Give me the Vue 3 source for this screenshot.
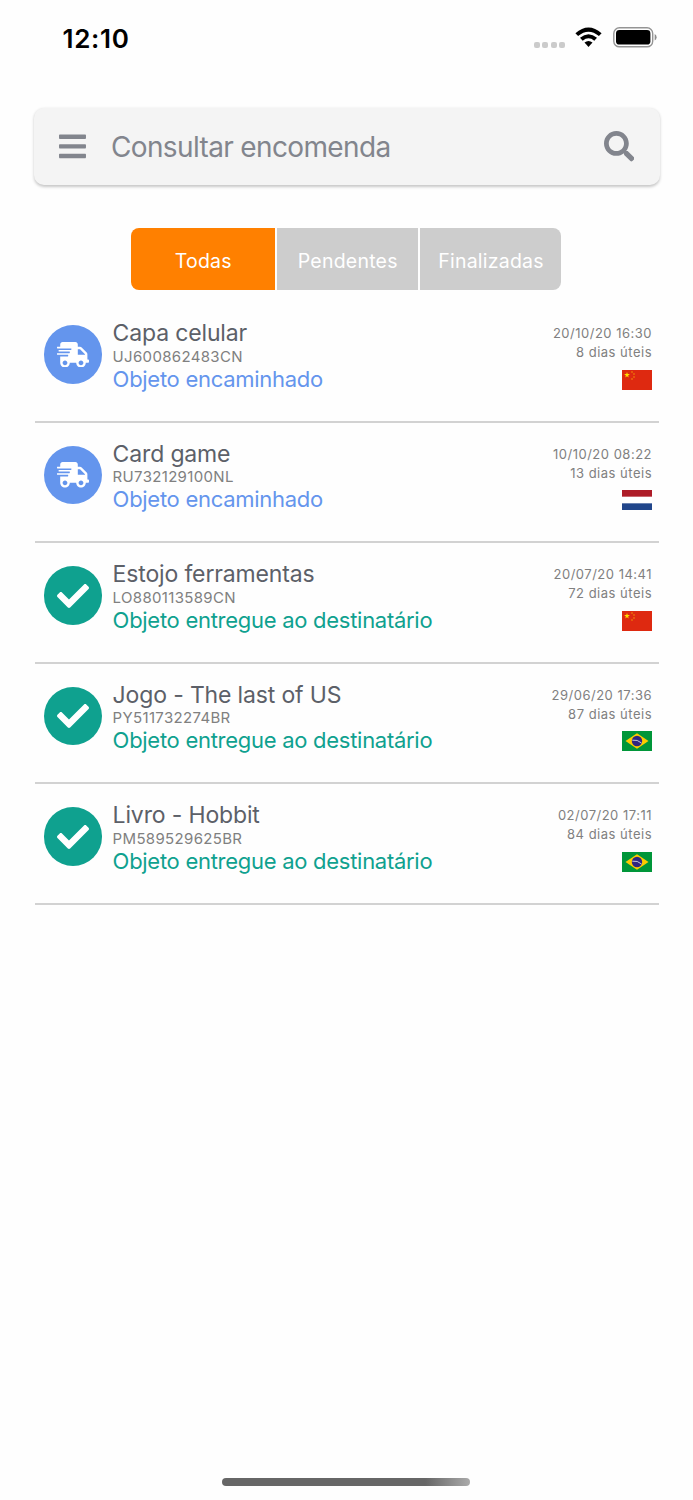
<script setup>
import { ref } from 'vue'

const tabs = ['Todas', 'Pendentes', 'Finalizadas']
const active = ref(0)

const parcels = [
  { name: 'Capa celular', code: 'UJ600862483CN', status: 'Objeto encaminhado', done: false, date: '20/10/20 16:30', days: '8 dias úteis', flag: 'cn' },
  { name: 'Card game', code: 'RU732129100NL', status: 'Objeto encaminhado', done: false, date: '10/10/20 08:22', days: '13 dias úteis', flag: 'nl' },
  { name: 'Estojo ferramentas', code: 'LO880113589CN', status: 'Objeto entregue ao destinatário', done: true, date: '20/07/20 14:41', days: '72 dias úteis', flag: 'cn' },
  { name: 'Jogo - The last of US', code: 'PY511732274BR', status: 'Objeto entregue ao destinatário', done: true, date: '29/06/20 17:36', days: '87 dias úteis', flag: 'br' },
  { name: 'Livro - Hobbit', code: 'PM589529625BR', status: 'Objeto entregue ao destinatário', done: true, date: '02/07/20 17:11', days: '84 dias úteis', flag: 'br' },
]
</script>

<template>
  <main class="screen">
    <header class="status-bar">
      <span class="clock">12:10</span>
      <div class="indicators">
        <span class="dots"><i></i><i></i><i></i><i></i></span>
        <svg class="wifi" viewBox="0 0 27 20" width="27" height="20">
          <path d="M0.4 6.2Q13.5 -5.4 26.6 6.2L23.9 9.1Q13.5 0.2 3.1 9.1Z" />
          <path d="M5 10.8Q13.5 3.5 22 10.8L19.3 13.7Q13.5 8.8 7.7 13.7Z" />
          <path d="M9.5 15.6Q13.5 12.3 17.5 15.6L13.5 20Z" />
        </svg>
        <svg class="battery" viewBox="0 0 44 21" width="44" height="21">
          <rect x="0.8" y="0.8" width="38.9" height="19" rx="5.6" fill="none" stroke="#949494" stroke-width="1.4" />
          <rect x="3" y="3" width="34.4" height="14.6" rx="3.4" />
          <path d="M41.7 7Q43.6 8 43.6 10.3Q43.6 12.6 41.7 13.6Z" fill="#8d8d8d" />
        </svg>
      </div>
    </header>

    <div class="search">
      <svg class="bars" viewBox="0 0 448 512" width="27" height="30.8">
        <path d="M16 132h416c8.8 0 16-7.2 16-16V76c0-8.8-7.2-16-16-16H16C7.2 60 0 67.2 0 76v40c0 8.8 7.2 16 16 16zm0 160h416c8.8 0 16-7.2 16-16v-40c0-8.8-7.2-16-16-16H16c-8.8 0-16 7.2-16 16v40c0 8.8 7.2 16 16 16zm0 160h416c8.8 0 16-7.2 16-16v-40c0-8.8-7.2-16-16-16H16c-8.8 0-16 7.2-16 16v40c0 8.8 7.2 16 16 16z" />
      </svg>
      <span class="placeholder">Consultar encomenda</span>
      <svg viewBox="0 0 512 512" width="30.5" height="30.5">
        <path d="M505 442.7L405.3 343c-4.5-4.5-10.6-7-17-7H372c27.6-35.3 44-79.7 44-128C416 93.1 322.9 0 208 0S0 93.1 0 208s93.1 208 208 208c48.3 0 92.7-16.4 128-44v16.3c0 6.4 2.5 12.5 7 17l99.7 99.7c9.4 9.4 24.6 9.4 33.9 0l28.3-28.3c9.4-9.4 9.4-24.6.1-34zM208 336c-70.7 0-128-57.2-128-128 0-70.7 57.2-128 128-128 70.7 0 128 57.2 128 128 0 70.7-57.2 128-128 128z" />
      </svg>
    </div>

    <nav class="tabs">
      <button v-for="(tab, i) in tabs" :key="tab" class="tab" :class="{ active: active === i }" @click="active = i">{{ tab }}</button>
    </nav>

    <ul class="list">
      <li v-for="p in parcels" :key="p.code" class="row" :class="{ done: p.done }">
        <div class="badge">
          <svg v-if="p.done" viewBox="0 0 512 512" width="32" height="32">
            <path d="M173.9 439.4l-166.4-166.4c-10-10-10-26.2 0-36.2l36.2-36.2c10-10 26.2-10 36.2 0L192 312.7 432.1 72.6c10-10 26.2-10 36.2 0l36.2 36.2c10 10 10 26.2 0 36.2l-294.4 294.4c-10 10-26.2 10-36.2 0z" />
          </svg>
          <svg v-else viewBox="0 0 640 512" width="32" height="25.6">
            <path d="M624 352h-16V243.9c0-12.7-5.1-24.9-14.1-33.9L494 110.1c-9-9-21.2-14.1-33.9-14.1H416V48c0-26.5-21.5-48-48-48H112C85.5 0 64 21.5 64 48v48H8c-4.4 0-8 3.6-8 8v16c0 4.4 3.6 8 8 8h272c4.4 0 8 3.6 8 8v16c0 4.4-3.6 8-8 8H40c-4.4 0-8 3.6-8 8v16c0 4.4 3.6 8 8 8h208c4.4 0 8 3.6 8 8v16c0 4.4-3.6 8-8 8H8c-4.4 0-8 3.6-8 8v16c0 4.4 3.6 8 8 8h208c4.4 0 8 3.6 8 8v16c0 4.4-3.6 8-8 8H64v128c0 53 43 96 96 96s96-43 96-96h128c0 53 43 96 96 96s96-43 96-96h48c8.8 0 16-7.2 16-16v-32c0-8.8-7.2-16-16-16zM160 464c-26.5 0-48-21.5-48-48s21.5-48 48-48 48 21.5 48 48-21.5 48-48 48zm320 0c-26.5 0-48-21.5-48-48s21.5-48 48-48 48 21.5 48 48-21.5 48-48 48zm80-208H416V144h44.1l99.9 99.9V256z" />
          </svg>
        </div>
        <div class="info">
          <span class="name">{{ p.name }}</span>
          <span class="code">{{ p.code }}</span>
          <span class="status">{{ p.status }}</span>
        </div>
        <div class="meta">
          <span>{{ p.date }}</span>
          <span>{{ p.days }}</span>
          <svg class="flag" viewBox="0 0 30 20" width="30" height="20">
            <template v-if="p.flag === 'cn'">
              <path fill="#de2910" d="M0 0h30v20H0z" />
              <path fill="#ffde00" d="M5 2l.7 2.1h2.2l-1.8 1.3.7 2.1L5 6.2 3.2 7.5l.7-2.1-1.8-1.3h2.2z" />
              <g fill="#f5a800">
                <circle cx="10" cy="2" r=".7" />
                <circle cx="12" cy="4" r=".7" />
                <circle cx="12" cy="7" r=".7" />
                <circle cx="10" cy="9" r=".7" />
              </g>
            </template>
            <template v-else-if="p.flag === 'nl'">
              <path fill="#fff" d="M0 0h30v20H0z" />
              <path fill="#ae1c28" d="M0 0h30v6.67H0z" />
              <path fill="#21468b" d="M0 13.33h30V20H0z" />
            </template>
            <template v-else>
              <path fill="#009639" d="M0 0h30v20H0z" />
              <path fill="#fecb00" d="M3.5 10L15 2.3 26.5 10 15 17.7z" />
              <circle cx="15" cy="10" r="5.2" fill="#302681" />
              <path d="M10.3 9.2Q15.5 8.3 19.5 12" fill="none" stroke="#d5dbe8" stroke-width=".9" />
            </template>
          </svg>
        </div>
      </li>
    </ul>

    <div class="home"></div>
  </main>
</template>

<style>
body { background: #fefefe; }
</style>

<style scoped>
.screen {
  box-sizing: border-box;
  width: 693px;
  height: 1500px;
  display: flex;
  flex-direction: column;
  overflow: hidden;
  background: #fefefe;
  font-family: Inter, "Liberation Sans", sans-serif;
}
.status-bar {
  height: 108px;
  box-sizing: border-box;
  padding: 22px 36px 0 62.5px;
  display: flex;
  justify-content: space-between;
  align-items: flex-start;
}
.clock { font-size: 26px; font-weight: 600; line-height: 33px; letter-spacing: .7px; color: #000; }
.indicators { display: flex; align-items: flex-start; padding-top: 5.4px; }
.dots { display: flex; gap: 2.3px; padding-top: 14.6px; margin-right: 10px; }
.dots i { width: 6.1px; height: 6px; border-radius: 2px; background: #cbcbcb; }
.wifi { margin-right: 11px; }
.search {
  box-sizing: border-box;
  height: 76.5px;
  margin: 0 33.5px;
  padding: 0 25.5px 0 25px;
  display: flex;
  align-items: center;
  border-radius: 10px;
  background: #f4f4f4;
  box-shadow: 0 1.5px 3px rgba(0, 0, 0, .22);
  fill: #82858d;
}
.placeholder { flex: 1; margin-left: 25.5px; padding-top: 1px; font-size: 28px; letter-spacing: -.64px; color: #82858d; }
.tabs {
  width: 430px;
  height: 62px;
  margin: 43.5px 0 0 131px;
  display: grid;
  grid-template-columns: 145.5px 143.5px 141px;
  border-radius: 8px;
  overflow: hidden;
}
.tab {
  border: 0;
  border-right: 2px solid #fefefe;
  padding: 4px 0 0 1px;
  background: #cdcdcd;
  color: #fff;
  font: 400 19.5px Inter, sans-serif;
  letter-spacing: .22px;
}
.tab:last-child { border-right: 0; }
.tab.active { background: #ff8000; }
.list { list-style: none; margin: 12px 34px 0 35px; padding: 0; }
.row {
  --accent: #6495ed;
  box-sizing: border-box;
  height: 120.5px;
  padding: 23.4px 7px 0 8.5px;
  display: flex;
  align-items: flex-start;
  border-bottom: 2px solid #d2d2d2;
}
.row.done { --accent: #0fa18f; }
.badge {
  width: 58.6px;
  height: 58.6px;
  border-radius: 50%;
  display: flex;
  align-items: center;
  justify-content: center;
  background: var(--accent);
  fill: #fff;
}
.info { flex: 1; display: flex; flex-direction: column; margin: -6px 0 0 10.5px; white-space: nowrap; }
.name { font-size: 23px; line-height: 28px; letter-spacing: -.15px; color: #5c6068; }
.code { padding-top: .6px; font-size: 15px; line-height: 18px; letter-spacing: .33px; color: #808080; }
.status { font-size: 22px; line-height: 27px; letter-spacing: -.28px; color: var(--accent); }
.meta {
  display: flex;
  flex-direction: column;
  align-items: flex-end;
  margin-top: -1.1px;
  font-size: 13px;
  line-height: 19px;
  letter-spacing: .5px;
  color: #808080;
}
.flag { margin-top: 7.4px; }
.home {
  width: 248px;
  height: 8px;
  margin: auto 0 14px 222.4px;
  border-radius: 4px;
  background: linear-gradient(90deg, #666 0%, #666 82%, #aaa 100%);
}
</style>
